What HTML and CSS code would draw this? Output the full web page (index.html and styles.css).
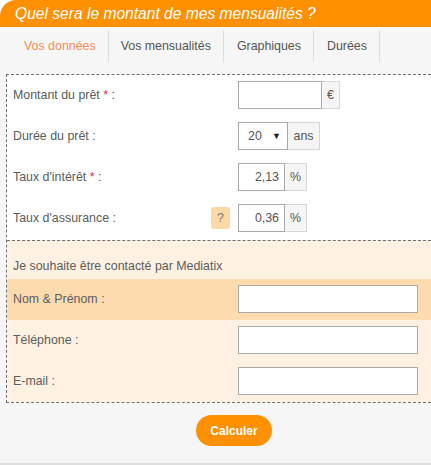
FILE: index.html
```html
<!DOCTYPE html>
<html lang="fr">
<head>
<meta charset="utf-8">
<link rel="stylesheet" href="styles.css">
</head>
<body>
<div class="widget">
  <h1 class="title">Quel sera le montant de mes mensualités ?</h1>
  <div class="panel">
    <ul class="tabs">
      <li class="tab active">Vos données</li>
      <li class="tab">Vos mensualités</li>
      <li class="tab">Graphiques</li>
      <li class="tab">Durées</li>
    </ul>
    <form class="box">
      <div class="section main">
        <div class="row">
          <label class="label">Montant du prêt&nbsp;<span class="req">*</span>&nbsp;:</label>
          <div class="group">
            <input class="field w-montant" type="text" value="">
            <span class="addon a-euro">€</span>
          </div>
        </div>
        <div class="row">
          <label class="label">Durée du prêt :</label>
          <div class="group">
            <div class="select"><span>20</span><span class="arrow">▼</span></div>
            <span class="addon a-ans">ans</span>
          </div>
        </div>
        <div class="row">
          <label class="label">Taux d'intérêt&nbsp;<span class="req">*</span>&nbsp;:</label>
          <div class="group">
            <input class="field w-taux" type="text" value="2,13">
            <span class="addon a-pct">%</span>
          </div>
        </div>
        <div class="row">
          <label class="label">Taux d'assurance :<span class="help">?</span></label>
          <div class="group">
            <input class="field w-taux" type="text" value="0,36">
            <span class="addon a-pct">%</span>
          </div>
        </div>
      </div>
      <div class="section contact">
        <div class="intro">Je souhaite être contacté par Mediatix</div>
        <div class="crow hl">
          <label class="label">Nom &amp; Prénom :</label>
          <input class="field wide" type="text">
        </div>
        <div class="crow">
          <label class="label">Téléphone :</label>
          <input class="field wide" type="text">
        </div>
        <div class="crow">
          <label class="label">E-mail :</label>
          <input class="field wide" type="text">
        </div>
      </div>
    </form>
    <div class="actions">
      <button class="btn" type="button">Calculer</button>
    </div>
  </div>
</div>
</body>
</html>
```
FILE: styles.css
```css
html, body {
  margin: 0;
  padding: 0;
  background: #ffffff;
}
body {
  font-family: "Liberation Sans", Arial, sans-serif;
  width: 431px;
  height: 465px;
  overflow: hidden;
}
.widget {
  width: 431px;
}
.title {
  margin: 0;
  height: 27px;
  line-height: 27px;
  padding-left: 15px;
  background: #ff9000;
  border-top-left-radius: 16px;
  color: #ffffff;
  font-size: 15.6px;
  font-style: italic;
  font-weight: normal;
}
.panel {
  background: #f6f6f6;
  border-bottom: 2px solid #dddddd;
  height: 438px;
  box-sizing: border-box;
}
.tabs {
  list-style: none;
  margin: 0;
  padding: 3px 0 0 11px;
  height: 43px;
  box-sizing: border-box;
  display: flex;
}
.tab {
  height: 32px;
  line-height: 32px;
  padding: 0 12px 0 13px;
  border-right: 1px solid #dcdcdc;
  font-size: 12.4px;
  color: #555555;
}
.tab:nth-child(2) { padding: 0 12px 0 12px; }
.tab.active { color: #f98b57; }
.box {
  margin: 4px 0 0 6px;
  border: 1px dashed #6f6f6f;
  border-right: none;
  background: #ffffff;
}
.section.main {
  padding: 6px 0 8px 6px;
  display: flex;
  flex-direction: column;
  gap: 13px;
}
.row, .crow {
  display: flex;
  align-items: center;
}
.label {
  width: 225px;
  flex: none;
  font-size: 12.4px;
  color: #5c5c5c;
  display: flex;
  align-items: center;
  white-space: pre;
}
.req { color: #d2335a; }
.help {
  margin-left: auto;
  margin-right: 8px;
  width: 19px;
  height: 22px;
  line-height: 22px;
  text-align: center;
  background: #fed9a8;
  border-radius: 3px;
  color: #777777;
  font-size: 12.4px;
}
.group {
  display: flex;
  height: 28px;
}
.field {
  box-sizing: border-box;
  height: 28px;
  margin: 0;
  border: 1px solid #a9a9a9;
  background: #ffffff;
  font-family: "Liberation Sans", Arial, sans-serif;
  font-size: 12.4px;
  color: #555555;
  text-align: right;
  padding: 0 5px;
  outline: none;
}
.w-montant { width: 84px; }
.w-taux { width: 47px; }
.wide { width: 180px; }
.select {
  box-sizing: border-box;
  width: 50px;
  height: 28px;
  border: 1px solid #a9a9a9;
  display: flex;
  align-items: center;
  justify-content: space-between;
  padding: 0 6px 0 9px;
  font-size: 12.4px;
  color: #555555;
}
.arrow { font-size: 9px; color: #222222; }
.addon {
  box-sizing: border-box;
  height: 28px;
  line-height: 26px;
  border: 1px solid #d6d6d6;
  border-left: none;
  background: #f5f5f5;
  text-align: center;
  font-size: 12.4px;
  color: #555555;
}
.a-euro { width: 18px; }
.a-ans { width: 32px; }
.a-pct { width: 22px; }
.section.contact {
  border-top: 1px dashed #6f6f6f;
  background: #fef1e1;
}
.intro {
  padding: 18px 6px 6px 6px;
  height: 38px;
  box-sizing: border-box;
  font-size: 12.4px;
  color: #5c5c5c;
}
.crow {
  height: 41px;
  padding: 0 0 1px 6px;
  box-sizing: border-box;
}
.crow.hl { background: #fedbae; }
.actions {
  display: flex;
  justify-content: center;
  padding-top: 12px;
  padding-left: 37px;
}
.btn {
  width: 76px;
  height: 31px;
  border: none;
  border-radius: 16px;
  background: #ff9000;
  color: #ffffff;
  font-family: "Liberation Sans", Arial, sans-serif;
  font-size: 12px;
  font-weight: bold;
  padding: 0;
}
```
